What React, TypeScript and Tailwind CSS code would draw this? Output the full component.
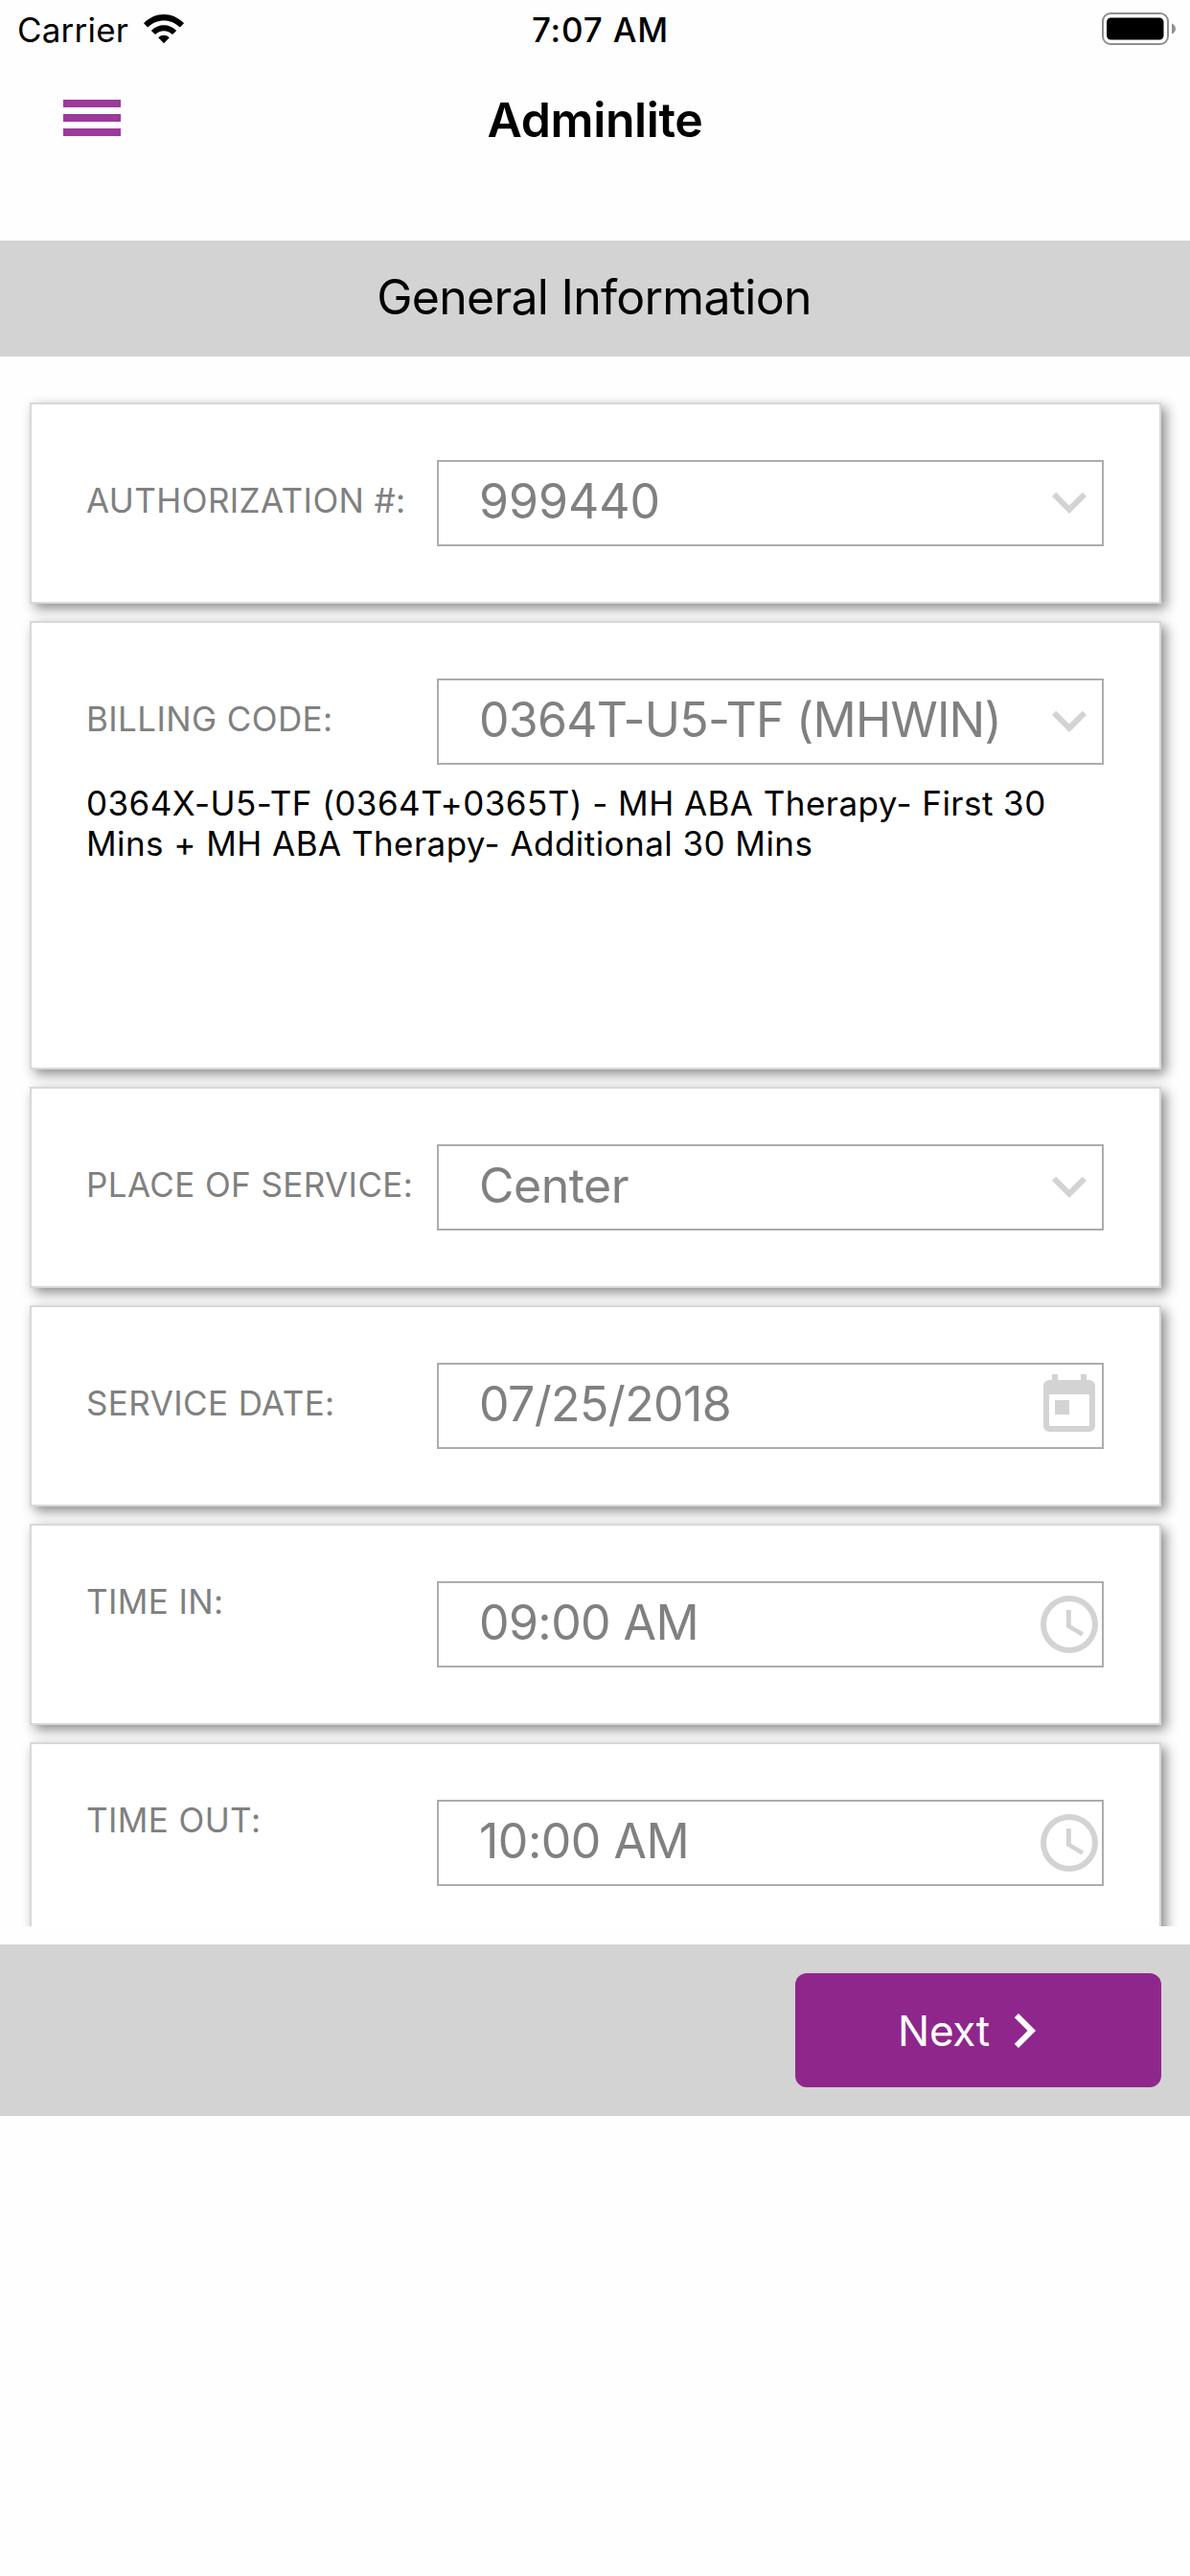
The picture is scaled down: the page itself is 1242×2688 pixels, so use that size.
const fields = [
  { label: "AUTHORIZATION #:", value: "999440", icon: "chevron", tracking: "tracking-normal" },
  {
    label: "BILLING CODE:",
    value: "0364T-U5-TF (MHWIN)",
    icon: "chevron",
    tracking: "tracking-[-0.75px]",
    note: "0364X-U5-TF (0364T+0365T) - MH ABA Therapy- First 30 Mins + MH ABA Therapy- Additional 30 Mins",
  },
  { label: "PLACE OF SERVICE:", value: "Center", icon: "chevron", tracking: "tracking-[-0.5px]" },
  { label: "SERVICE DATE:", value: "07/25/2018", icon: "calendar", tracking: "tracking-[-0.6px]" },
  { label: "TIME IN:", value: "09:00 AM", icon: "clock", tracking: "tracking-[-0.6px]" },
  { label: "TIME OUT:", value: "10:00 AM", icon: "clock", tracking: "tracking-[-0.5px]" },
];

const iconPaths: Record<string, string> = {
  chevron: "M7.41 8.29 12 12.87l4.59-4.58L18 9.7l-6 6-6-6z",
  calendar:
    "M19 3h-1V1h-2v2H8V1H6v2H5a2 2 0 0 0-2 2v14a2 2 0 0 0 2 2h14a2 2 0 0 0 2-2V5a2 2 0 0 0-2-2zm0 16H5V8h14v11zM7 10h5v5H7z",
  clock:
    "M12 2a10 10 0 1 0 0 20 10 10 0 0 0 0-20zm0 18a8 8 0 1 1 0-16 8 8 0 0 1 0 16zM12.6 7h-1.6v6l5.2 3.15.8-1.3-4.4-2.6z",
  next: "M10 6 8.59 7.41 13.17 12l-4.58 4.59L10 18l6-6z",
};

function Icon({ name }: { name: string }) {
  return (
    <svg viewBox="0 0 24 24" className="size-[72px] shrink-0 fill-current">
      <path d={iconPaths[name]} />
    </svg>
  );
}

function StatusBar() {
  return (
    <div className="flex h-[62px] items-center pl-[18px] pr-[15px] text-[35px]">
      <div className="flex w-[537px] items-center">
        <span className="w-[132px] tracking-[0.2px]">Carrier</span>
        <svg viewBox="0 0 42 31" className="mb-[2px] h-[31px] w-[42px]">
          <path
            d="M0 9.3C12-3.1 30-3.1 42 9.3l-4.2 4.2c-9.4-9.4-24.2-9.4-33.6 0z"
            fill="black"
          />
          <path
            d="M7.8 16.9c7.4-7.6 19-7.6 26.4 0L30 21.1c-5.1-5.1-12.9-5.1-18 0z"
            fill="black"
          />
          <path d="M15.2 24.3c3.3-3.3 8.3-3.3 11.6 0L21 30.2z" fill="black" />
        </svg>
      </div>
      <span className="font-medium tracking-[0.8px]">7:07 AM</span>
      <svg viewBox="0 0 77 34" className="ml-auto mb-[2px] h-[34px] w-[77px]">
        <rect x="1" y="1" width="68" height="32" rx="8" fill="white" stroke="#8f8f8f" strokeWidth="2" />
        <rect x="5" y="5.5" width="59.5" height="23" rx="4.5" fill="black" />
        <path d="M73 11.5c5.3 2 5.3 9 0 11z" fill="#8f8f8f" />
      </svg>
    </div>
  );
}

function NavBar() {
  return (
    <nav className="mb-[61px] grid h-[128px] grid-cols-3 items-center">
      <div className="mb-[6px] ml-[66px] flex w-[60px] flex-col gap-[7px]">
        <div className="h-[8px] bg-[#9b3a9b]" />
        <div className="h-[8px] bg-[#9b3a9b]" />
        <div className="h-[8px] bg-[#9b3a9b]" />
      </div>
      <h1 className="pb-[1px] text-center text-[50px] font-semibold tracking-[-0.4px]">Adminlite</h1>
    </nav>
  );
}

function Field({ label, value, icon, tracking, note }: (typeof fields)[number]) {
  return (
    <div
      className={`relative shrink-0 border-2 border-[#d8d8d8] bg-white pl-[57px] pr-[58px] pt-[58px] shadow-[5px_5px_12px_rgba(0,0,0,0.45)] ${
        note ? "h-[468px]" : "h-[210px]"
      }`}
    >
      <div className="flex h-[90px]">
        <label
          className={`flex w-[366px] shrink-0 items-center text-[35px] tracking-[0.4px] text-[#808080] ${
            icon === "clock" ? "h-[43px]" : "h-[85px]"
          }`}
        >
          {label}
        </label>
        <div className="flex flex-1 items-center justify-between border-2 border-[#acacac] pl-[42px]">
          <span className={`whitespace-nowrap pb-1 text-[50px] leading-none text-[#808080] ${tracking}`}>
            {value}
          </span>
          <span className="-mr-[2px] text-[#d3d3d3]">
            <Icon name={icon} />
          </span>
        </div>
      </div>
      {note && <p className="mt-[19px] text-[35px] leading-[42px] tracking-[0.45px]">{note}</p>}
    </div>
  );
}

export default function App() {
  return (
    <main className="flex h-[2688px] w-[1242px] flex-col bg-[#fefefe] font-['Inter',sans-serif] text-black">
      <StatusBar />
      <NavBar />

      <h2 className="flex h-[121px] items-center justify-center bg-[#d3d3d3] pb-[3px] pr-[2px] text-[50px] tracking-[-0.75px]">
        General Information
      </h2>

      <div className="flex h-[1638px] flex-col gap-[18px] overflow-hidden pl-[31px] pr-[30px] pt-[48px]">
        {fields.map((field) => (
          <Field key={field.label} {...field} />
        ))}
      </div>

      <footer className="mt-[19px] flex h-[179px] justify-end bg-[#d3d3d3] px-[30px] pt-[30px]">
        <button className="flex h-[119px] w-[382px] items-center justify-center rounded-[12px] bg-[#8f268c] text-[44px] tracking-[-0.3px] text-white">
          Next
          <Icon name="next" />
        </button>
      </footer>
    </main>
  );
}
